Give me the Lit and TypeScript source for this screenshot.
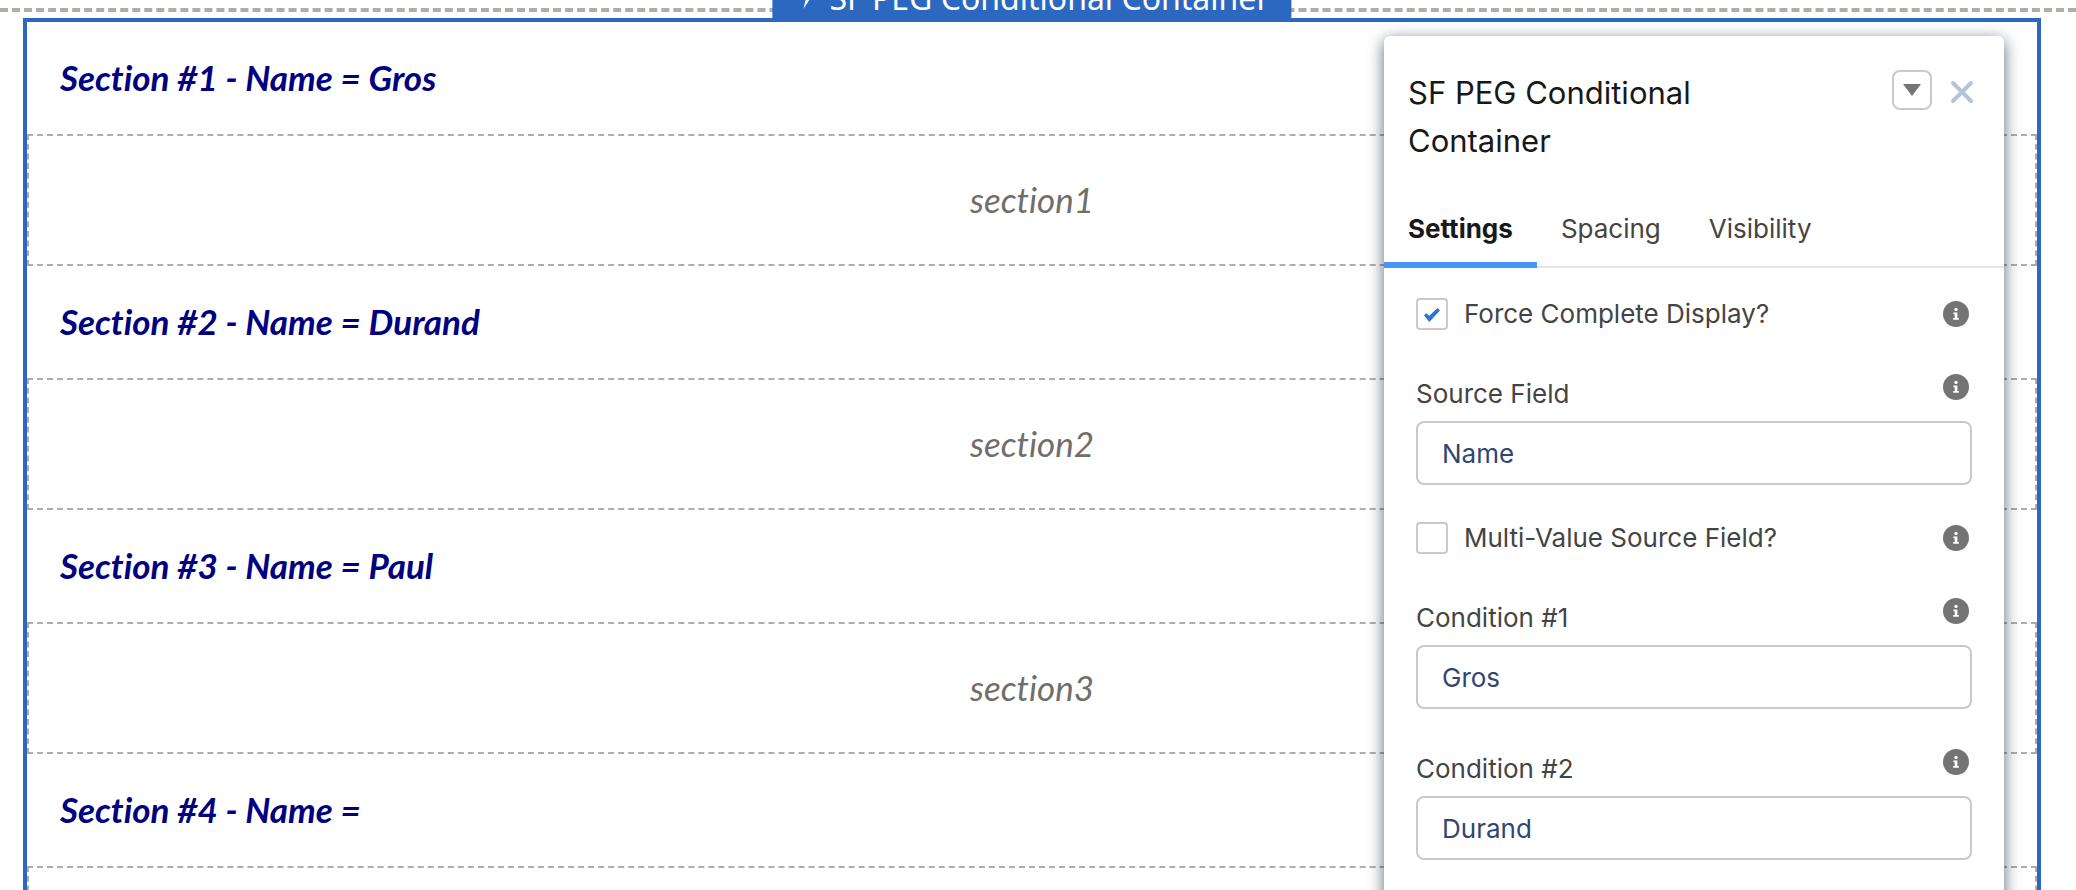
import { LitElement, html, css, svg } from "lit";
import { customElement, property } from "lit/decorators.js";

const infoIcon = svg`
  <circle cx="13" cy="13" r="13" fill="#747474" />
  <circle cx="13" cy="8.4" r="1.7" fill="#fff" />
  <path d="M10.4 11.4h4v5.6h1.4v1.8h-5.6V17h1.5v-3.8h-1.3z" fill="#fff" />
`;

@customElement("info-button")
class InfoButton extends LitElement {
  static styles = css`
    :host { display: block; }
    .info {
      display: block;
      padding: 0;
      border: 0;
      background: none;
      width: 26px;
      height: 26px;
      cursor: pointer;
    }
    .glyph { display: block; width: 26px; height: 26px; }
  `;

  render() {
    return html`<button class="info" aria-label="Help" type="button">
      <svg class="glyph" viewBox="0 0 26 26" aria-hidden="true">${infoIcon}</svg>
    </button>`;
  }
}

@customElement("text-field")
class TextField extends LitElement {
  @property() label = "";
  @property() value = "";

  static styles = css`
    :host { display: block; }
    .head {
      display: flex;
      align-items: flex-start;
      justify-content: space-between;
      padding: 0 3px 12px 0;
    }
    .label { padding-top: 5px; font-size: 26px; line-height: 30px; color: #444; }
    .input {
      display: block;
      box-sizing: border-box;
      width: 100%;
      height: 64px;
      padding: 0 24px;
      border: 2px solid #c9c9c9;
      border-radius: 8px;
      background: #fff;
      color: #2f4672;
      font: inherit;
      font-size: 26px;
      outline: none;
    }
  `;

  render() {
    return html`
      <div class="head">
        <label class="label" for="field">${this.label}</label>
        <info-button></info-button>
      </div>
      <input class="input" id="field" type="text" .value=${this.value} />
    `;
  }
}

@customElement("check-field")
class CheckField extends LitElement {
  @property() label = "";
  @property({ type: Boolean }) checked = false;

  static styles = css`
    :host { display: block; }
    .row {
      display: flex;
      align-items: center;
      justify-content: space-between;
      padding-right: 3px;
    }
    .option { display: flex; align-items: center; gap: 16px; }
    .box {
      appearance: none;
      display: grid;
      place-items: center;
      box-sizing: border-box;
      width: 32px;
      height: 32px;
      margin: 0;
      padding-top: 2px;
      border: 2px solid #c9c9c9;
      border-radius: 4px;
      background: #fff;
    }
    .box:checked::before {
      content: "";
      width: 16px;
      height: 14px;
      background: #2a73d9;
      clip-path: polygon(0 51%, 14% 37%, 33% 56%, 84% 0, 100% 17%, 33% 100%);
    }
    .text { font-size: 26px; line-height: 32px; color: #444; }
  `;

  render() {
    return html`
      <div class="row">
        <div class="option">
          <input class="box" id="box" type="checkbox" .checked=${this.checked} />
          <label class="text" for="box">${this.label}</label>
        </div>
        <info-button></info-button>
      </div>
    `;
  }
}

@customElement("property-panel")
class PropertyPanel extends LitElement {
  static styles = css`
    :host {
      display: block;
      box-sizing: border-box;
      min-height: 100vh;
      background: #fff;
      border-radius: 6px;
      box-shadow: 0 4px 16px rgba(20, 40, 60, 0.7);
      font-family: Inter, "Liberation Sans", sans-serif;
    }
    .header {
      display: flex;
      justify-content: space-between;
      align-items: flex-start;
      padding: 33px 28px 0 24px;
    }
    .title {
      margin: 0;
      max-width: 360px;
      font-size: 31px;
      line-height: 48px;
      font-weight: 400;
      color: #181818;
    }
    .actions { display: flex; align-items: flex-start; gap: 16px; padding-top: 1px; }
    .menu {
      display: grid;
      place-items: center;
      box-sizing: border-box;
      width: 40px;
      height: 40px;
      padding: 0;
      border: 2px solid #c9c9c9;
      border-radius: 8px;
      background: #fff;
    }
    .close { display: grid; place-items: center; width: 28px; height: 44px; padding: 0; border: 0; background: none; }
    .icon { display: block; }
    .tabs { display: flex; margin-top: 31px; border-bottom: 2px solid #e5e5e5; }
    .tab {
      padding: 0 24px 2px;
      margin-bottom: -2px;
      height: 72px;
      border: 0;
      border-bottom: 6px solid transparent;
      background: none;
      font: inherit;
      font-size: 26px;
      color: #444;
    }
    .tab.current { border-bottom-color: #4a94f5; font-weight: 700; color: #181818; }
    .fields { padding: 30px 32px; }
    .fields > check-field + text-field { margin-top: 44px; }
    .fields > text-field + check-field { margin-top: 37px; }
    .fields > text-field + text-field { margin-top: 40px; }
  `;

  render() {
    return html`
      <div class="header">
        <h2 class="title">SF PEG Conditional Container</h2>
        <div class="actions">
          <button class="menu" aria-label="More actions" type="button">
            <svg class="icon" width="18" height="12" viewBox="0 0 18 12"><path d="M0 0h18l-9 12z" fill="#747474" /></svg>
          </button>
          <button class="close" aria-label="Close" type="button">
            <svg class="icon" width="24" height="24" viewBox="0 0 24 24"><path d="M3 3l18 18M21 3L3 21" stroke="#b3c4da" stroke-width="4" stroke-linecap="round" /></svg>
          </button>
        </div>
      </div>
      <div class="tabs" role="tablist">
        <button class="tab current" role="tab" aria-selected="true">Settings</button>
        <button class="tab" role="tab" aria-selected="false">Spacing</button>
        <button class="tab" role="tab" aria-selected="false">Visibility</button>
      </div>
      <div class="fields">
        <check-field label="Force Complete Display?" checked></check-field>
        <text-field label="Source Field" value="Name"></text-field>
        <check-field label="Multi-Value Source Field?"></check-field>
        <text-field label="Condition #1" value="Gros"></text-field>
        <text-field label="Condition #2" value="Durand"></text-field>
      </div>
    `;
  }
}

@customElement("app-root")
class AppRoot extends LitElement {
  private sections = [
    { title: "Section #1 - Name = Gros", slot: "section1" },
    { title: "Section #2 - Name = Durand", slot: "section2" },
    { title: "Section #3 - Name = Paul", slot: "section3" },
    { title: "Section #4 - Name =", slot: "" },
  ];

  static styles = css`
    :host {
      display: block;
      position: relative;
      height: 100vh;
      overflow: hidden;
      background: #fff;
      font-family: Lato, sans-serif;
      font-variant-ligatures: none;
    }
    .region { padding: 8px 0 0; }
    .edge { border-top: 4px dashed #b0ada9; }
    .container { margin: 6px 35px 0 23px; border: 4px solid #2d68c0; }
    .tag {
      position: absolute;
      top: -26px;
      left: calc(50% - 6px);
      transform: translateX(-50%);
      display: flex;
      align-items: center;
      gap: 15px;
      box-sizing: border-box;
      height: 46px;
      padding: 0 22px 0 28px;
      background: #2d68c0;
      color: #fff;
      font-family: "Noto Sans", sans-serif;
      font-size: 32px;
      white-space: nowrap;
    }
    .heading {
      margin: 0;
      padding: 31px 33px 33px;
      font-size: 35px;
      line-height: 48px;
      font-weight: 700;
      font-style: italic;
      color: #000080;
    }
    .slot {
      display: grid;
      place-items: center;
      box-sizing: border-box;
      height: 132px;
      padding-bottom: 3px;
      border: 2px dashed #b0ada9;
      color: #706e6b;
      font-weight: 400;
      font-size: 35px;
      font-style: italic;
    }
    .panel { position: absolute; top: 36px; right: 72px; width: 620px; }
  `;

  render() {
    return html`
      <main class="region">
        <div class="edge"></div>
        <div class="container">
          ${this.sections.map(
            (s) => html`<h3 class="heading">${s.title}</h3><div class="slot">${s.slot}</div>`,
          )}
        </div>
      </main>
      <div class="tag">
        <svg width="14" height="28" viewBox="0 0 14 28" aria-hidden="true"><path d="M5 0h7L9 9h5L3 26l3-12H0z" fill="#fff" /></svg>
        <span>SF PEG Conditional Container</span>
      </div>
      <property-panel class="panel"></property-panel>
    `;
  }
}
